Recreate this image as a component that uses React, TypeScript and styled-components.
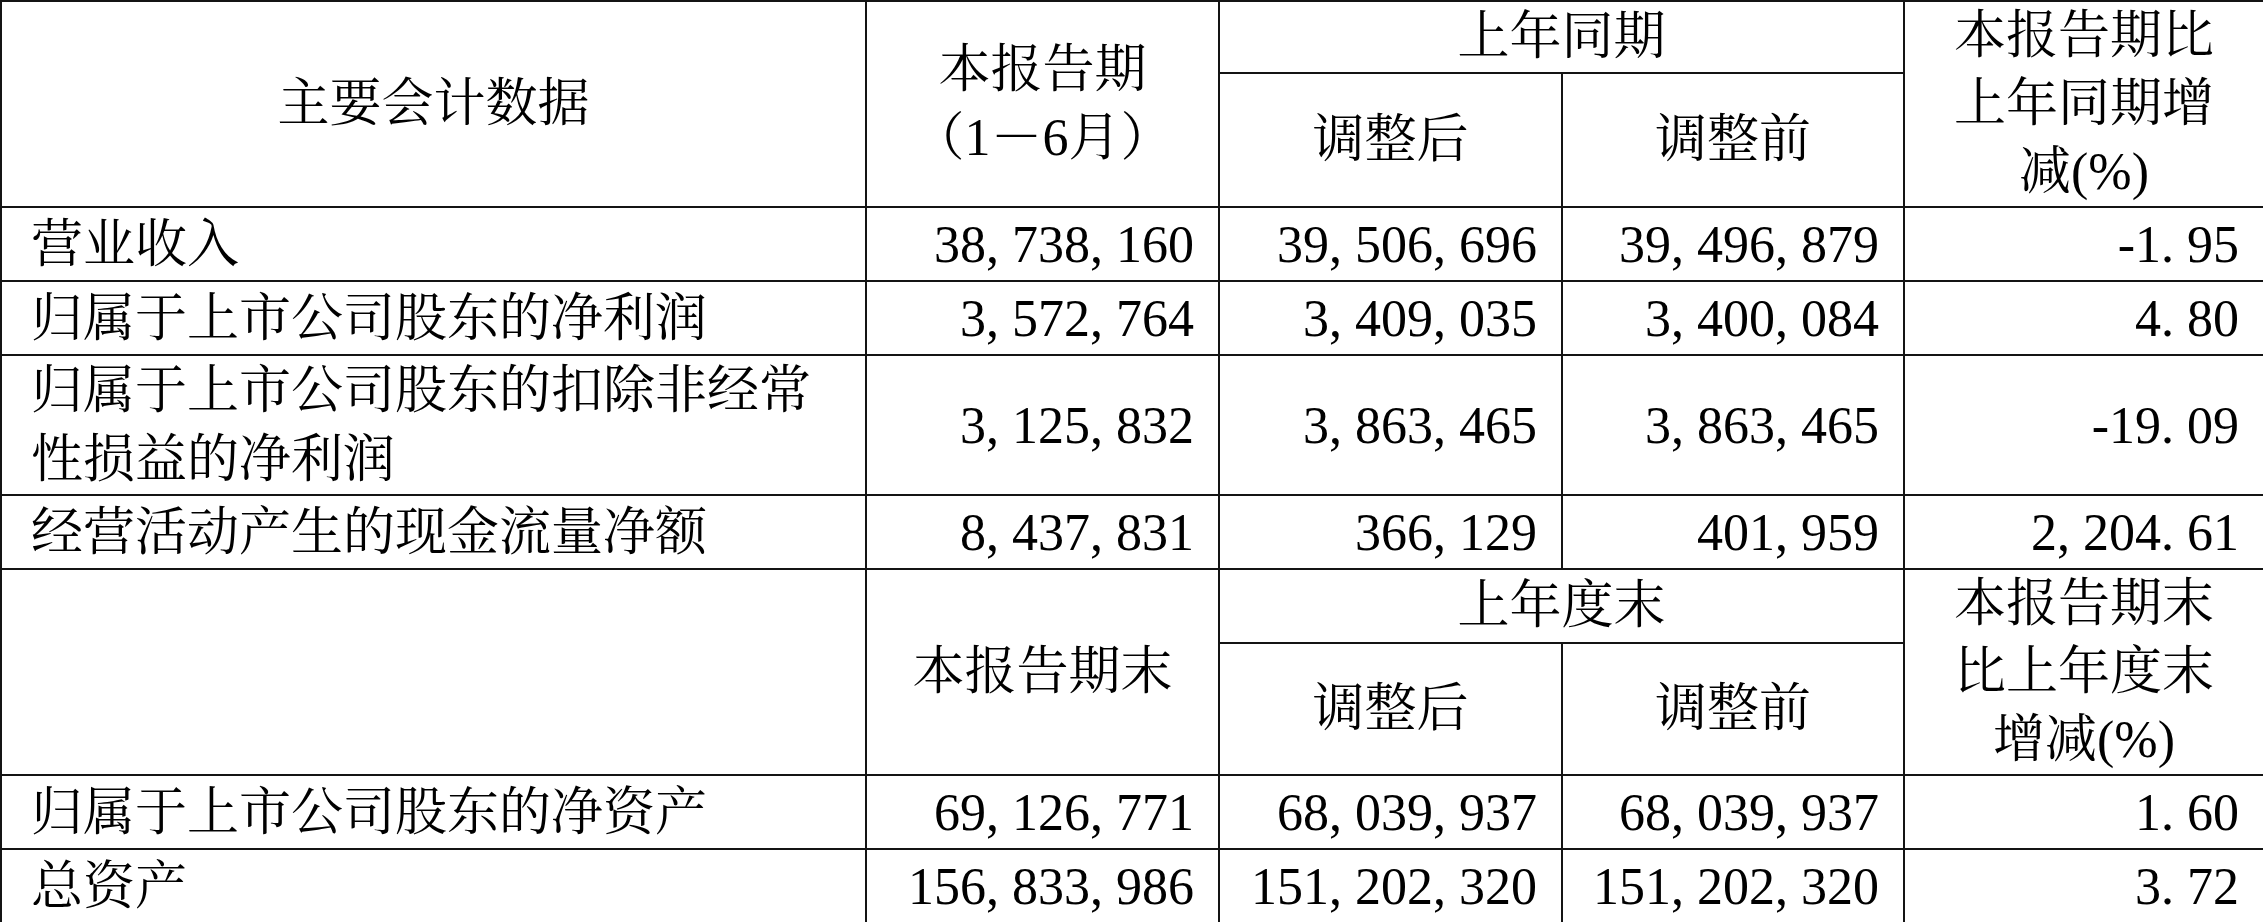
import React from "react";
import styled, { createGlobalStyle } from "styled-components";

const Global = createGlobalStyle`
  html, body { margin: 0; padding: 0; background: #ffffff; }
  body {
    font-family: "Liberation Serif", "Noto Serif CJK SC", "Noto Sans CJK SC", serif;
    color: #000;
  }
`;

const Table = styled.table`
  width: 2263px;
  table-layout: fixed;
  border-collapse: collapse;
  font-size: 52px;
  font-family: "Liberation Serif", "Noto Serif CJK SC", "Noto Sans CJK SC", serif;
  color: #000;
`;

const Row = styled.tr<{ $h: number }>`
  height: ${(p) => p.$h}px;
`;

const Cell = styled.td<{ $align?: "left" | "center" | "right" }>`
  border: 2px solid #141414;
  padding: 0 ${(p) => (p.$align === "right" ? "24px" : "29px")} 0
    ${(p) => (p.$align === "right" ? "0" : "29px")};
  text-align: ${(p) => p.$align ?? "left"};
  vertical-align: middle;
  line-height: 69px;
  font-weight: normal;
  white-space: normal;
  overflow: hidden;
`;

const HeadCell = styled(Cell).attrs({ as: "th" })`
  padding: 0;
  text-align: center;
  line-height: 68px;
`;

const Punct = styled.span`
  padding-right: 0.25em;
`;

const Num: React.FC<{ v: string }> = ({ v }) => {
  const parts: React.ReactNode[] = [];
  let buf = "";
  [...v].forEach((ch, i) => {
    if (ch === "," || ch === ".") {
      if (buf) parts.push(buf);
      buf = "";
      parts.push(<Punct key={i}>{ch}</Punct>);
    } else {
      buf += ch;
    }
  });
  if (buf) parts.push(buf);
  return <>{parts}</>;
};

type DataRow = { label: string; h: number; vals: [string, string, string, string] };

const top: DataRow[] = [
  { label: "营业收入", h: 74, vals: ["38,738,160", "39,506,696", "39,496,879", "-1.95"] },
  { label: "归属于上市公司股东的净利润", h: 74, vals: ["3,572,764", "3,409,035", "3,400,084", "4.80"] },
  {
    label: "归属于上市公司股东的扣除非经常性损益的净利润",
    h: 138,
    vals: ["3,125,832", "3,863,465", "3,863,465", "-19.09"],
  },
  { label: "经营活动产生的现金流量净额", h: 74, vals: ["8,437,831", "366,129", "401,959", "2,204.61"] },
];

const bottom: DataRow[] = [
  { label: "归属于上市公司股东的净资产", h: 74, vals: ["69,126,771", "68,039,937", "68,039,937", "1.60"] },
  { label: "总资产", h: 74, vals: ["156,833,986", "151,202,320", "151,202,320", "3.72"] },
];

const Body: React.FC<{ rows: DataRow[] }> = ({ rows }) => (
  <>
    {rows.map((r) => (
      <Row $h={r.h} key={r.label}>
        <Cell $align="left">{r.label}</Cell>
        {r.vals.map((v, i) => (
          <Cell $align="right" key={i}>
            <Num v={v} />
          </Cell>
        ))}
      </Row>
    ))}
  </>
);

export default function App() {
  return (
    <>
      <Global />
      <Table>
        <colgroup>
          <col style={{ width: 865 }} />
          <col style={{ width: 353 }} />
          <col style={{ width: 343 }} />
          <col style={{ width: 342 }} />
          <col style={{ width: 360 }} />
        </colgroup>
        <tbody>
          <Row $h={72}>
            <HeadCell rowSpan={2}>主要会计数据</HeadCell>
            <HeadCell rowSpan={2}>
              本报告期
              <br />
              （1－6月）
            </HeadCell>
            <HeadCell colSpan={2}>上年同期</HeadCell>
            <HeadCell rowSpan={2}>
              本报告期比
              <br />
              上年同期增
              <br />
              减(%)
            </HeadCell>
          </Row>
          <Row $h={134}>
            <HeadCell>调整后</HeadCell>
            <HeadCell>调整前</HeadCell>
          </Row>
          <Body rows={top} />
          <Row $h={74}>
            <HeadCell rowSpan={2}></HeadCell>
            <HeadCell rowSpan={2}>本报告期末</HeadCell>
            <HeadCell colSpan={2}>上年度末</HeadCell>
            <HeadCell rowSpan={2}>
              本报告期末
              <br />
              比上年度末
              <br />
              增减(%)
            </HeadCell>
          </Row>
          <Row $h={132}>
            <HeadCell>调整后</HeadCell>
            <HeadCell>调整前</HeadCell>
          </Row>
          <Body rows={bottom} />
        </tbody>
      </Table>
    </>
  );
}
